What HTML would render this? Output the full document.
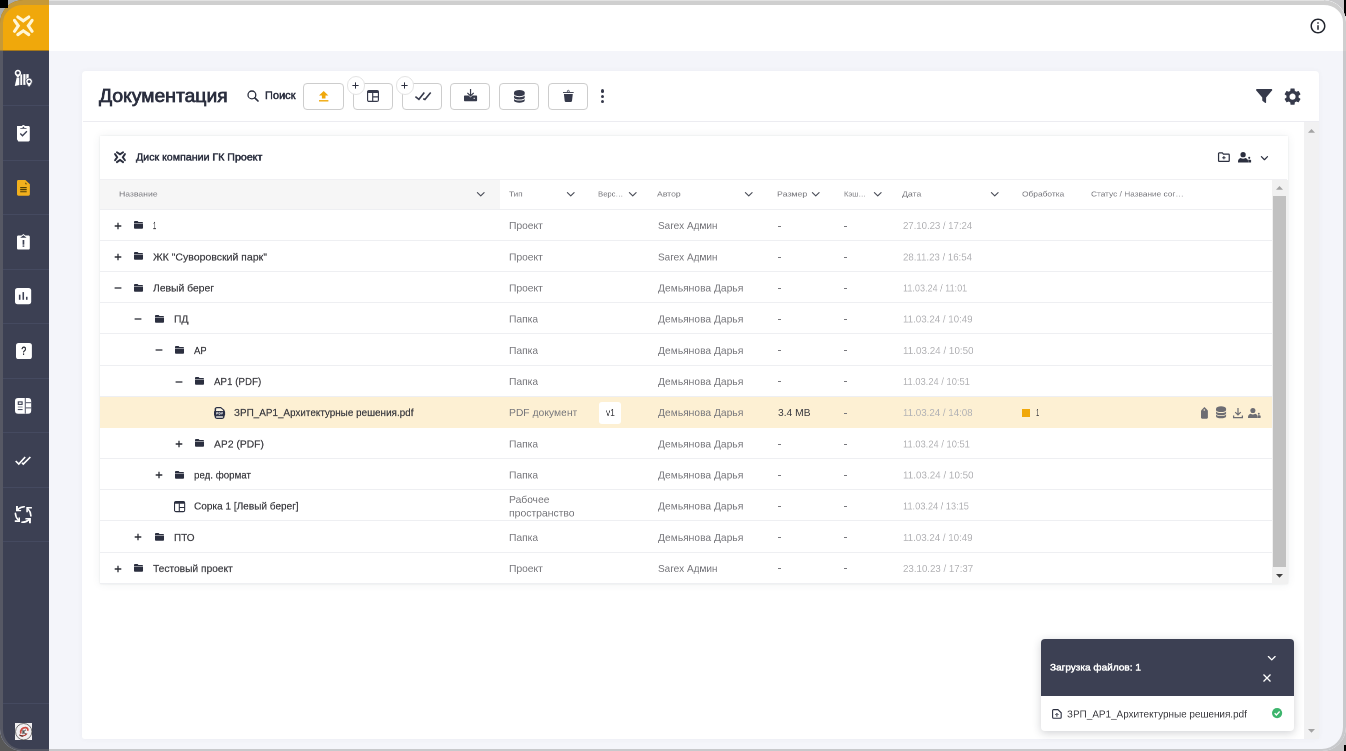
<!DOCTYPE html>
<html lang="ru">
<head>
<meta charset="utf-8">
<title>Документация</title>
<style>
*{box-sizing:border-box;margin:0;padding:0}
html,body{width:1346px;height:751px;overflow:hidden}
body{position:relative;background:#cdcdcd;font-family:"Liberation Sans",sans-serif;color:#2f3342;font-size:11px}
.abs{position:absolute}
svg{display:block;position:absolute;overflow:visible}
#win{position:absolute;left:0;top:0;width:1346px;height:751px;border-radius:23px 22px 24px 22px;overflow:hidden;background:#f4f5fa}
#page{position:absolute;left:0;top:0;width:1346px;height:751px}
#ring{position:absolute;left:0;top:0;width:1346px;height:751px;border-radius:23px 22px 24px 22px;border-style:solid;border-color:rgba(128,128,128,.38);border-width:5px 3px 2px 3px}
.t{position:absolute;white-space:nowrap;transform-origin:0 0;will-change:transform}
.btn{position:absolute;top:83px;width:40.200px;height:26.600px;border:1px solid #cdcdcd;border-radius:4px;background:#fff}
.pl{position:absolute;top:76.200px;width:18.500px;height:18.500px;border:1px solid #e4e4e4;border-radius:50%;background:#fff}
.sep{position:absolute;left:3px;width:46px;height:1px;background:#454a60}
.rb{position:absolute;left:100px;width:1173px;height:1px;background:#eeeff2}
</style>
</head>
<body>

<div class="abs" style="left:0;top:0;width:673px;height:375px;background:#a9adb1"></div>
<div class="abs" style="left:673px;top:0;width:673px;height:375px;background:#c9c9cb"></div>
<div class="abs" style="left:0;top:375px;width:673px;height:376px;background:#585858"></div>
<div class="abs" style="left:673px;top:375px;width:673px;height:376px;background:#c4c4c6"></div>
<div class="abs" style="left:1344px;top:0;width:2px;height:16px;background:#000"></div>
<div class="abs" style="left:1344px;top:745px;width:2px;height:6px;background:#000"></div>
<div id="win"><div id="page">
<div class="abs" style="left:0;top:0;width:49px;height:751px;background:#3c4053"></div>
<div class="abs" style="left:0;top:0;width:49px;height:50px;background:#f0a80b"></div>
<div class="abs" style="left:0;top:49.500px;width:49px;height:1.500px;background:#a3761a"></div>
<svg style="left:0;top:0" width="60" height="200" viewBox="0 0 60 200"><path d="M17.81 16.98 L23.30 20.80 L28.79 16.98 M17.81 34.62 L23.30 30.80 L28.79 34.62 M14.48 20.31 L18.30 25.80 L14.48 31.29 M32.12 20.31 L28.30 25.80 L32.12 31.29 " fill="none" stroke="#fff6d6" stroke-width="3.1" stroke-linecap="round" stroke-linejoin="miter"/></svg>
<div class="sep" style="top:105px"></div>
<div class="sep" style="top:159.5px"></div>
<div class="sep" style="top:214px"></div>
<div class="sep" style="top:268.5px"></div>
<div class="sep" style="top:323px"></div>
<div class="sep" style="top:377.5px"></div>
<div class="sep" style="top:432px"></div>
<div class="sep" style="top:486.5px"></div>
<div class="sep" style="top:541px"></div>
<div class="sep" style="top:703px"></div>
<div class="abs" style="left:49px;top:0;width:1297px;height:50.500px;background:#fff"></div>
<svg style="left:1308.5px;top:16.8px" width="18" height="18" viewBox="0 0 24 24" ><path fill="#23262f" d="M11 7h2v2h-2zm0 4h2v6h-2zm1-9C6.48 2 2 6.480 2 12s4.480 10 10 10 10-4.480 10-10S17.520 2 12 2zm0 18c-4.410 0-8-3.590-8-8s3.590-8 8-8 8 3.590 8 8-3.590 8-8 8z"/></svg>
<div class="abs" style="left:82.200px;top:70.700px;width:1236.800px;height:668.300px;background:#fff;border-radius:4px 4px 3px 3px;box-shadow:0 0 5px rgba(70,75,100,.05)"></div>
<div class="abs" style="left:83px;top:121px;width:1236px;height:1px;background:#ececf1"></div>
<div class="t" style="left:98.9px;top:86px;font-size:36px;line-height:39px;color:#2b2f3f;transform:scale(0.5373,.5);-webkit-text-stroke:1.4px #2b2f3f;">Документация</div>
<svg style="left:246.9px;top:89.9px" width="12" height="12" viewBox="0 0 12 12" ><circle cx="4.900" cy="4.900" r="3.900" fill="none" stroke="#2b2f3f" stroke-width="1.300"/><path d="M7.800 7.800 11 11" stroke="#2b2f3f" stroke-width="1.700" stroke-linecap="round"/></svg>
<div class="t" style="left:265.0px;top:89px;font-size:21.2px;line-height:25px;color:#2b2f3f;transform:scale(0.5192,.5);-webkit-text-stroke:1px #2b2f3f;">Поиск</div>
<div class="btn" style="left:303.4px"></div>
<div class="btn" style="left:353.1px"></div>
<div class="btn" style="left:401.9px"></div>
<div class="btn" style="left:450.3px"></div>
<div class="btn" style="left:499.1px"></div>
<div class="btn" style="left:548.2px"></div>
<div class="pl" style="left:346.6px"></div>
<svg style="left:352.4px;top:82.0px" width="7" height="7" viewBox="0 0 7 7" ><path d="M3.5 .4v6.2M.4 3.5h6.2" stroke="#2b2f3f" stroke-width="1" fill="none"/></svg>
<div class="pl" style="left:395.5px"></div>
<svg style="left:401.2px;top:82.0px" width="7" height="7" viewBox="0 0 7 7" ><path d="M3.5 .4v6.2M.4 3.5h6.2" stroke="#2b2f3f" stroke-width="1" fill="none"/></svg>
<svg style="left:319.4px;top:90.9px" width="9.4" height="10.5" viewBox="0 0 9.400 10.500" ><path d="M4.700 0 9.400 4.500H6.500V7.500H2.900V4.500H0z" fill="#f0a80b"/><rect x="0" y="9.100" width="9.400" height="1.400" fill="#f0a80b"/></svg>
<svg style="left:367.0px;top:89.9px" width="12" height="12" viewBox="0 0 12 12" ><rect x="0.575" y="0.575" width="10.85" height="10.85" rx="1.500" fill="none" stroke="#363a4b" stroke-width="1.15"/><rect x=".500" y=".500" width="11" height="2.6" rx="1" fill="#363a4b"/><path d="M5.700 2.500v9M5.700 6.900h5.800" stroke="#363a4b" stroke-width="1.15" fill="none"/></svg>
<svg style="left:414.7px;top:92.3px" width="16" height="8.4" viewBox="0 0 16 8.400" ><path d="M.400 4.600 3.900 7.300 9.300.600M8.200 6.800 9.900 7.500 15.700.600" fill="none" stroke="#363a4b" stroke-width="1.600" stroke-linejoin="miter"/></svg>
<svg style="left:463.9px;top:89.3px" width="13.1" height="12.2" viewBox="0 0 13.100 12.200" ><path d="M0 7.600c0-.600.400-1 1-1h3.700l1.850 1.900 1.850-1.900h3.700c.600 0 1 .400 1 1v3.600c0 .600-.400 1-1 1H1c-.600 0-1-.400-1-1z" fill="#363a4b"/><path d="M6.550 0v7M3.400 3.900 6.550 7 9.700 3.900" fill="none" stroke="#363a4b" stroke-width="1.200"/><rect x="9.600" y="8.800" width="1.300" height="1" fill="#fff"/></svg>
<svg style="left:514.4px;top:89.6px" width="10.7" height="12.8" viewBox="0 0 10.700 12.800" ><path d="M0 2.600C0 1.160 2.400 0 5.350 0S10.700 1.160 10.700 2.600V4C10.700 5.400 8.300 6.200 5.350 6.200S0 5.400 0 4z" fill="#363a4b"/><path d="M0 5.600C.900 6.700 3 7.200 5.350 7.200S9.800 6.700 10.700 5.600V7.400C10.700 8.800 8.300 9.600 5.350 9.600S0 8.800 0 7.400z" fill="#363a4b"/><path d="M0 8.900C.900 10 3 10.500 5.350 10.500S9.800 10 10.700 8.900V10.600C10.700 12 8.300 12.800 5.350 12.800S0 12 0 10.600z" fill="#363a4b"/></svg>
<svg style="left:563.1px;top:89.9px" width="10.7" height="11.9" viewBox="0 0 10.700 11.900" ><path d="M0 2.100h10.700v.900H0z" fill="#363a4b"/><circle cx="5.350" cy="1.300" r="1" fill="none" stroke="#363a4b" stroke-width=".800"/><path d="M.900 3.900h8.900l-.800 7.200c-.050.500-.400.800-.900.800H2.600c-.500 0-.850-.300-.900-.800z" fill="#363a4b"/></svg>
<div class="abs" style="left:601px;top:89.4px;width:3.400px;height:3.400px;border-radius:50%;background:#363a4b"></div>
<div class="abs" style="left:601px;top:94.6px;width:3.400px;height:3.400px;border-radius:50%;background:#363a4b"></div>
<div class="abs" style="left:601px;top:99.7px;width:3.400px;height:3.400px;border-radius:50%;background:#363a4b"></div>
<svg style="left:1255.7px;top:89.0px" width="16.3" height="14" viewBox="0 0 16.300 14" ><path d="M.900 0h14.500c.750 0 1.150.900.650 1.450L10.100 8.400v5.100c0 .400-.450.650-.800.400L6.700 12.100c-.300-.200-.450-.500-.450-.850V8.400L.250 1.450C-.250.900.150 0 .900 0z" fill="#363a4b"/></svg>
<svg style="left:1283.7px;top:87.9px" width="17.1" height="17.3" viewBox="1.900 1.900 20.200 20.200" ><path fill="#363a4b" d="M19.140 12.940c.040-.300.060-.610.060-.940 0-.320-.020-.640-.070-.940l2.030-1.580c.180-.140.230-.410.120-.610l-1.920-3.320c-.120-.220-.370-.290-.590-.220l-2.390.960c-.500-.380-1.030-.700-1.620-.940l-.360-2.540c-.040-.240-.240-.410-.480-.410h-3.840c-.240 0-.430.170-.470.410l-.360 2.540c-.590.240-1.130.570-1.620.940l-2.390-.960c-.220-.080-.470 0-.590.220L2.740 8.870c-.120.210-.080.470.120.610l2.030 1.580c-.050.300-.090.630-.090.940s.020.640.070.940l-2.030 1.580c-.180.140-.230.410-.120.610l1.920 3.320c.120.220.370.290.590.220l2.390-.960c.500.380 1.030.700 1.620.940l.360 2.540c.050.240.240.410.480.410h3.840c.240 0 .440-.170.470-.410l.360-2.540c.590-.240 1.130-.560 1.620-.940l2.390.960c.220.080.470 0 .590-.220l1.920-3.320c.120-.220.070-.470-.120-.610l-2.010-1.580zM12 15.600c-1.980 0-3.600-1.620-3.600-3.600s1.620-3.600 3.600-3.600 3.600 1.620 3.600 3.600-1.620 3.600-3.600 3.600z"/></svg>
<div class="abs" style="left:1303.800px;top:121.500px;width:15.200px;height:617.500px;background:#f1f1f2"></div>
<svg style="left:1308.0px;top:128.5px" width="7" height="3.8" viewBox="0 0 7 3.800" ><path d="M0 3.800 3.500 0 7 3.800z" fill="#a3a3a3"/></svg>
<svg style="left:1308.0px;top:729.2px" width="7" height="3.8" viewBox="0 0 7 3.800" ><path d="M0 0 3.500 3.800 7 0z" fill="#a3a3a3"/></svg>
<div class="abs" style="left:99.500px;top:135.800px;width:1188.200px;height:447.800px;background:#fff;box-shadow:0 0 9px rgba(60,64,82,.07),0 0 2px rgba(60,64,82,.10)"></div>
<svg style="left:0;top:0" width="60" height="200" viewBox="0 0 60 200"><path d="M116.92 152.25 L120.00 154.39 L123.08 152.25 M116.92 162.15 L120.00 160.00 L123.08 162.15 M115.05 154.12 L117.19 157.20 L115.05 160.28 M124.95 154.12 L122.81 157.20 L124.95 160.28 " fill="none" stroke="#2b2f3f" stroke-width="1.9" stroke-linecap="round" stroke-linejoin="miter"/></svg>
<div class="t" style="left:135.8px;top:151px;font-size:19.6px;line-height:24px;color:#2b2f3f;transform:scale(0.5426,.5);-webkit-text-stroke:0.9px #2b2f3f;">Диск компании ГК Проект</div>
<svg style="left:1218.2px;top:152.4px" width="11.8" height="10.2" viewBox="0 0 12.600 10.400" ><path d="M1.300.700h3.300l1.200 1.300h5.500c.400 0 .700.300.700.700v6.300c0 .400-.300.700-.700.700H1.300c-.400 0-.700-.300-.700-.700V1.400c0-.400.300-.700.700-.700z" fill="none" stroke="#2b2f3f" stroke-width="1.300"/><path d="M6.300 4v3.600M4.500 5.800h3.600" stroke="#2b2f3f" stroke-width="1.100"/></svg>
<svg style="left:1237.8px;top:152.3px" width="13.2" height="10.4" viewBox="0 0 14 11" ><circle cx="5.400" cy="2.800" r="2.800" fill="#2b2f3f"/><path d="M0 10.300c0-2.100 1.200-3.400 2.800-3.900 1.600 1 3.600 1 5.200 0 1.600.500 2.800 1.800 2.800 3.900v.700H0z" fill="#2b2f3f"/><circle cx="11.900" cy="6.200" r="1.100" fill="#2b2f3f"/><path d="M10.900 8.100h2.100c.5 0 .9.400.9.900v2h-3z" fill="#2b2f3f"/></svg>
<svg style="left:1259.8px;top:154.6px" width="8.9" height="6.2" viewBox="-4.45 -3.1 8.9 6.2" ><path d="M-3.05 -1.5 L0 1.6 L3.05 -1.5" fill="none" stroke="#2b2f3f" stroke-width="1.25" stroke-linecap="round" stroke-linejoin="round"/></svg>
<div class="abs" style="left:100px;top:179px;width:1173px;height:30.500px;background:#fff"></div>
<div class="abs" style="left:100px;top:179px;width:399.500px;height:30.500px;background:#f6f6f6"></div>
<div class="abs" style="left:100px;top:179px;width:1187px;height:1px;background:#f0f0f3"></div>
<div class="t" style="left:118.8px;top:189px;font-size:15.2px;line-height:19px;color:#7b7b80;transform:scale(0.5683,.5);">Название</div>
<div class="t" style="left:509.0px;top:189px;font-size:15.2px;line-height:19px;color:#7b7b80;transform:scale(0.5367,.5);">Тип</div>
<div class="t" style="left:598.4px;top:189px;font-size:15.2px;line-height:19px;color:#7b7b80;transform:scale(0.5076,.5);">Верс…</div>
<div class="t" style="left:657.3px;top:189px;font-size:15.2px;line-height:19px;color:#7b7b80;transform:scale(0.5700,.5);">Автор</div>
<div class="t" style="left:776.7px;top:189px;font-size:15.2px;line-height:19px;color:#7b7b80;transform:scale(0.5800,.5);">Размер</div>
<div class="t" style="left:843.6px;top:189px;font-size:15.2px;line-height:19px;color:#7b7b80;transform:scale(0.5000,.5);">Кэш…</div>
<div class="t" style="left:902.4px;top:189px;font-size:15.2px;line-height:19px;color:#7b7b80;transform:scale(0.5734,.5);">Дата</div>
<div class="t" style="left:1022.2px;top:189px;font-size:15.2px;line-height:19px;color:#7b7b80;transform:scale(0.5505,.5);">Обработка</div>
<div class="t" style="left:1091.1px;top:189px;font-size:15.2px;line-height:19px;color:#7b7b80;transform:scale(0.5464,.5);">Статус / Название сог…</div>
<svg style="left:476.4px;top:191.1px" width="9.5" height="6.4" viewBox="-4.75 -3.2 9.5 6.4" ><path d="M-3.35 -1.6 L0 1.7 L3.35 -1.6" fill="none" stroke="#4a4d58" stroke-width="1.15" stroke-linecap="round" stroke-linejoin="round"/></svg>
<svg style="left:566.0px;top:191.1px" width="9.5" height="6.4" viewBox="-4.75 -3.2 9.5 6.4" ><path d="M-3.35 -1.6 L0 1.7 L3.35 -1.6" fill="none" stroke="#4a4d58" stroke-width="1.15" stroke-linecap="round" stroke-linejoin="round"/></svg>
<svg style="left:627.5px;top:191.1px" width="9.5" height="6.4" viewBox="-4.75 -3.2 9.5 6.4" ><path d="M-3.35 -1.6 L0 1.7 L3.35 -1.6" fill="none" stroke="#4a4d58" stroke-width="1.15" stroke-linecap="round" stroke-linejoin="round"/></svg>
<svg style="left:744.4px;top:191.1px" width="9.5" height="6.4" viewBox="-4.75 -3.2 9.5 6.4" ><path d="M-3.35 -1.6 L0 1.7 L3.35 -1.6" fill="none" stroke="#4a4d58" stroke-width="1.15" stroke-linecap="round" stroke-linejoin="round"/></svg>
<svg style="left:811.2px;top:191.1px" width="9.5" height="6.4" viewBox="-4.75 -3.2 9.5 6.4" ><path d="M-3.35 -1.6 L0 1.7 L3.35 -1.6" fill="none" stroke="#4a4d58" stroke-width="1.15" stroke-linecap="round" stroke-linejoin="round"/></svg>
<svg style="left:873.1px;top:191.1px" width="9.5" height="6.4" viewBox="-4.75 -3.2 9.5 6.4" ><path d="M-3.35 -1.6 L0 1.7 L3.35 -1.6" fill="none" stroke="#4a4d58" stroke-width="1.15" stroke-linecap="round" stroke-linejoin="round"/></svg>
<svg style="left:989.9px;top:191.1px" width="9.5" height="6.4" viewBox="-4.75 -3.2 9.5 6.4" ><path d="M-3.35 -1.6 L0 1.7 L3.35 -1.6" fill="none" stroke="#4a4d58" stroke-width="1.15" stroke-linecap="round" stroke-linejoin="round"/></svg>
<div class="rb" style="top:209px"></div>
<div class="rb" style="top:240px"></div>
<div class="rb" style="top:271px"></div>
<div class="rb" style="top:302px"></div>
<div class="rb" style="top:333px"></div>
<div class="rb" style="top:365px"></div>
<div class="rb" style="top:396px"></div>
<div class="rb" style="top:427px"></div>
<div class="rb" style="top:458px"></div>
<div class="rb" style="top:489px"></div>
<div class="rb" style="top:520px"></div>
<div class="rb" style="top:552px"></div>
<div class="rb" style="top:583px"></div>
<div class="abs" style="left:100px;top:396.500px;width:1173px;height:31.400px;background:#fdf0d3"></div>
<svg style="left:114.0px;top:221.7px" width="8" height="8" viewBox="0 0 8 8" ><path d="M4 .700v6.600M.700 4h6.600" stroke="#2c2e36" stroke-width="1.300" fill="none"/></svg>
<svg style="left:134.3px;top:221.2px" width="9.4" height="8" viewBox="0 0 10 8.4" ><path d="M0.9 0h2.9l1 1.1h3.9c.5 0 .9.4.9.9v.5H0V.9C0 .4.4 0 .9 0z" fill="#2b2f3f"/><path d="M0 3.2h9.6v4.2c0 .5-.4.9-.9.9H.9c-.5 0-.9-.4-.9-.9z" fill="#2b2f3f"/></svg>
<div class="t" style="left:153.2px;top:220px;font-size:20.4px;line-height:22px;color:#3d3d42;transform:scale(0.2997,.5);-webkit-text-stroke:0.4px #3d3d42;">1</div>
<div class="t" style="left:509.0px;top:220px;font-size:20.4px;line-height:22px;color:#77777c;transform:scale(0.5030,.5);">Проект</div>
<div class="t" style="left:657.9px;top:220px;font-size:20.4px;line-height:22px;color:#77777c;transform:scale(0.4911,.5);">Sarex Админ</div>
<div class="abs" style="left:777.500px;top:225.5px;width:3.500px;height:1px;background:#77777c"></div>
<div class="abs" style="left:843.800px;top:225.5px;width:3.500px;height:1px;background:#77777c"></div>
<div class="t" style="left:903.4px;top:220px;font-size:20.4px;line-height:22px;color:#b3b3b6;transform:scale(0.4693,.5);">27.10.23 / 17:24</div>
<svg style="left:114.0px;top:252.8px" width="8" height="8" viewBox="0 0 8 8" ><path d="M4 .700v6.600M.700 4h6.600" stroke="#2c2e36" stroke-width="1.300" fill="none"/></svg>
<svg style="left:134.3px;top:252.3px" width="9.4" height="8" viewBox="0 0 10 8.4" ><path d="M0.9 0h2.9l1 1.1h3.9c.5 0 .9.4.9.9v.5H0V.9C0 .4.4 0 .9 0z" fill="#2b2f3f"/><path d="M0 3.2h9.6v4.2c0 .5-.4.9-.9.9H.9c-.5 0-.9-.4-.9-.9z" fill="#2b2f3f"/></svg>
<div class="t" style="left:153.2px;top:251px;font-size:20.4px;line-height:24px;color:#3d3d42;transform:scale(0.5151,.5);-webkit-text-stroke:0.4px #3d3d42;">ЖК "Суворовский парк"</div>
<div class="t" style="left:509.0px;top:251px;font-size:20.4px;line-height:24px;color:#77777c;transform:scale(0.5030,.5);">Проект</div>
<div class="t" style="left:657.9px;top:251px;font-size:20.4px;line-height:24px;color:#77777c;transform:scale(0.4911,.5);">Sarex Админ</div>
<div class="abs" style="left:777.500px;top:256.6px;width:3.500px;height:1px;background:#77777c"></div>
<div class="abs" style="left:843.800px;top:256.6px;width:3.500px;height:1px;background:#77777c"></div>
<div class="t" style="left:903.4px;top:251px;font-size:20.4px;line-height:24px;color:#b3b3b6;transform:scale(0.4728,.5);">28.11.23 / 16:54</div>
<svg style="left:114.0px;top:284.0px" width="8" height="8" viewBox="0 0 8 8" ><path d="M.600 4h6.800" stroke="#2c2e36" stroke-width="1.300" fill="none"/></svg>
<svg style="left:134.3px;top:283.5px" width="9.4" height="8" viewBox="0 0 10 8.4" ><path d="M0.9 0h2.9l1 1.1h3.9c.5 0 .9.4.9.9v.5H0V.9C0 .4.4 0 .9 0z" fill="#2b2f3f"/><path d="M0 3.2h9.6v4.2c0 .5-.4.9-.9.9H.9c-.5 0-.9-.4-.9-.9z" fill="#2b2f3f"/></svg>
<div class="t" style="left:153.2px;top:282px;font-size:20.4px;line-height:24px;color:#3d3d42;transform:scale(0.5074,.5);-webkit-text-stroke:0.4px #3d3d42;">Левый берег</div>
<div class="t" style="left:509.0px;top:282px;font-size:20.4px;line-height:24px;color:#77777c;transform:scale(0.5030,.5);">Проект</div>
<div class="t" style="left:657.9px;top:282px;font-size:20.4px;line-height:24px;color:#77777c;transform:scale(0.5039,.5);">Демьянова Дарья</div>
<div class="abs" style="left:777.500px;top:287.8px;width:3.500px;height:1px;background:#77777c"></div>
<div class="abs" style="left:843.800px;top:287.8px;width:3.500px;height:1px;background:#77777c"></div>
<div class="t" style="left:903.4px;top:282px;font-size:20.4px;line-height:24px;color:#b3b3b6;transform:scale(0.4445,.5);">11.03.24 / 11:01</div>
<svg style="left:134.3px;top:315.2px" width="8" height="8" viewBox="0 0 8 8" ><path d="M.600 4h6.800" stroke="#2c2e36" stroke-width="1.300" fill="none"/></svg>
<svg style="left:154.7px;top:314.7px" width="9.4" height="8" viewBox="0 0 10 8.4" ><path d="M0.9 0h2.9l1 1.1h3.9c.5 0 .9.4.9.9v.5H0V.9C0 .4.4 0 .9 0z" fill="#2b2f3f"/><path d="M0 3.2h9.6v4.2c0 .5-.4.9-.9.9H.9c-.5 0-.9-.4-.9-.9z" fill="#2b2f3f"/></svg>
<div class="t" style="left:173.5px;top:313px;font-size:20.4px;line-height:24px;color:#3d3d42;transform:scale(0.5004,.5);-webkit-text-stroke:0.4px #3d3d42;">ПД</div>
<div class="t" style="left:509.0px;top:313px;font-size:20.4px;line-height:24px;color:#77777c;transform:scale(0.5037,.5);">Папка</div>
<div class="t" style="left:657.9px;top:313px;font-size:20.4px;line-height:24px;color:#77777c;transform:scale(0.5039,.5);">Демьянова Дарья</div>
<div class="abs" style="left:777.500px;top:319.0px;width:3.500px;height:1px;background:#77777c"></div>
<div class="abs" style="left:843.800px;top:319.0px;width:3.500px;height:1px;background:#77777c"></div>
<div class="t" style="left:903.4px;top:313px;font-size:20.4px;line-height:24px;color:#b3b3b6;transform:scale(0.4769,.5);">11.03.24 / 10:49</div>
<svg style="left:154.7px;top:346.3px" width="8" height="8" viewBox="0 0 8 8" ><path d="M.600 4h6.800" stroke="#2c2e36" stroke-width="1.300" fill="none"/></svg>
<svg style="left:175.0px;top:345.8px" width="9.4" height="8" viewBox="0 0 10 8.4" ><path d="M0.9 0h2.9l1 1.1h3.9c.5 0 .9.4.9.9v.5H0V.9C0 .4.4 0 .9 0z" fill="#2b2f3f"/><path d="M0 3.2h9.6v4.2c0 .5-.4.9-.9.9H.9c-.5 0-.9-.4-.9-.9z" fill="#2b2f3f"/></svg>
<div class="t" style="left:193.9px;top:345px;font-size:20.4px;line-height:22px;color:#3d3d42;transform:scale(0.4704,.5);-webkit-text-stroke:0.4px #3d3d42;">АР</div>
<div class="t" style="left:509.0px;top:345px;font-size:20.4px;line-height:22px;color:#77777c;transform:scale(0.5037,.5);">Папка</div>
<div class="t" style="left:657.9px;top:345px;font-size:20.4px;line-height:22px;color:#77777c;transform:scale(0.5039,.5);">Демьянова Дарья</div>
<div class="abs" style="left:777.500px;top:350.1px;width:3.500px;height:1px;background:#77777c"></div>
<div class="abs" style="left:843.800px;top:350.1px;width:3.500px;height:1px;background:#77777c"></div>
<div class="t" style="left:903.4px;top:345px;font-size:20.4px;line-height:22px;color:#b3b3b6;transform:scale(0.4837,.5);">11.03.24 / 10:50</div>
<svg style="left:175.1px;top:377.5px" width="8" height="8" viewBox="0 0 8 8" ><path d="M.600 4h6.800" stroke="#2c2e36" stroke-width="1.300" fill="none"/></svg>
<svg style="left:195.4px;top:377.0px" width="9.4" height="8" viewBox="0 0 10 8.4" ><path d="M0.9 0h2.9l1 1.1h3.9c.5 0 .9.4.9.9v.5H0V.9C0 .4.4 0 .9 0z" fill="#2b2f3f"/><path d="M0 3.2h9.6v4.2c0 .5-.4.9-.9.9H.9c-.5 0-.9-.4-.9-.9z" fill="#2b2f3f"/></svg>
<div class="t" style="left:214.2px;top:376px;font-size:20.4px;line-height:22px;color:#3d3d42;transform:scale(0.4791,.5);-webkit-text-stroke:0.4px #3d3d42;">АР1 (PDF)</div>
<div class="t" style="left:509.0px;top:376px;font-size:20.4px;line-height:22px;color:#77777c;transform:scale(0.5037,.5);">Папка</div>
<div class="t" style="left:657.9px;top:376px;font-size:20.4px;line-height:22px;color:#77777c;transform:scale(0.5039,.5);">Демьянова Дарья</div>
<div class="abs" style="left:777.500px;top:381.3px;width:3.500px;height:1px;background:#77777c"></div>
<div class="abs" style="left:843.800px;top:381.3px;width:3.500px;height:1px;background:#77777c"></div>
<div class="t" style="left:903.4px;top:376px;font-size:20.4px;line-height:22px;color:#b3b3b6;transform:scale(0.4584,.5);">11.03.24 / 10:51</div>
<svg style="left:213.7px;top:406.6px" width="11.1" height="12.1" viewBox="0 0 11.100 12.100" ><path d="M2.800 0h4.100l3.600 3v6.600c0 1.400-1.100 2.500-2.500 2.500H3.100c-1.400 0-2.500-1.100-2.500-2.500V2.200C.600 1 1.600 0 2.800 0z" fill="#2b3045"/><path d="M2.300 1.300h4.400l2.400 2v.900H2z" fill="#fff8e6"/><rect x="2" y="8.900" width="7.100" height="2" rx=".700" fill="#bcbcbc"/><rect x="0" y="4.100" width="11.100" height="4.600" rx=".900" fill="#2b3045"/><path d="M2.600 7.500V5.400h.900c.900 0 .900 1.200 0 1.200h-.900M5 5.400v2.100h.700c1.200 0 1.200-2.100 0-2.100zM7.700 7.500V5.400h1.200M7.700 6.500h1" stroke="#fff" stroke-width=".650" fill="none"/></svg>
<div class="t" style="left:234.4px;top:407px;font-size:20.4px;line-height:22px;color:#3d3d42;transform:scale(0.4855,.5);-webkit-text-stroke:0.4px #3d3d42;">ЗРП_АР1_Архитектурные решения.pdf</div>
<div class="t" style="left:509.0px;top:407px;font-size:20.4px;line-height:22px;color:#77777c;transform:scale(0.5066,.5);">PDF документ</div>
<div class="t" style="left:657.9px;top:407px;font-size:20.4px;line-height:22px;color:#77777c;transform:scale(0.5039,.5);">Демьянова Дарья</div>
<div class="t" style="left:777.5px;top:407px;font-size:20.4px;line-height:22px;color:#3d3d42;transform:scale(0.5029,.5);">3.4 MB</div>
<div class="abs" style="left:843.800px;top:412.5px;width:3.500px;height:1px;background:#77777c"></div>
<div class="t" style="left:903.4px;top:407px;font-size:20.4px;line-height:22px;color:#b3b3b6;transform:scale(0.4769,.5);">11.03.24 / 14:08</div>
<svg style="left:175.1px;top:439.8px" width="8" height="8" viewBox="0 0 8 8" ><path d="M4 .700v6.600M.700 4h6.600" stroke="#2c2e36" stroke-width="1.300" fill="none"/></svg>
<svg style="left:195.4px;top:439.3px" width="9.4" height="8" viewBox="0 0 10 8.4" ><path d="M0.9 0h2.9l1 1.1h3.9c.5 0 .9.4.9.9v.5H0V.9C0 .4.4 0 .9 0z" fill="#2b2f3f"/><path d="M0 3.2h9.6v4.2c0 .5-.4.9-.9.9H.9c-.5 0-.9-.4-.9-.9z" fill="#2b2f3f"/></svg>
<div class="t" style="left:214.2px;top:438px;font-size:20.4px;line-height:24px;color:#3d3d42;transform:scale(0.5065,.5);-webkit-text-stroke:0.4px #3d3d42;">АР2 (PDF)</div>
<div class="t" style="left:509.0px;top:438px;font-size:20.4px;line-height:24px;color:#77777c;transform:scale(0.5037,.5);">Папка</div>
<div class="t" style="left:657.9px;top:438px;font-size:20.4px;line-height:24px;color:#77777c;transform:scale(0.5039,.5);">Демьянова Дарья</div>
<div class="abs" style="left:777.500px;top:443.6px;width:3.500px;height:1px;background:#77777c"></div>
<div class="abs" style="left:843.800px;top:443.6px;width:3.500px;height:1px;background:#77777c"></div>
<div class="t" style="left:903.4px;top:438px;font-size:20.4px;line-height:24px;color:#b3b3b6;transform:scale(0.4584,.5);">11.03.24 / 10:51</div>
<svg style="left:154.7px;top:471.0px" width="8" height="8" viewBox="0 0 8 8" ><path d="M4 .700v6.600M.700 4h6.600" stroke="#2c2e36" stroke-width="1.300" fill="none"/></svg>
<svg style="left:175.0px;top:470.5px" width="9.4" height="8" viewBox="0 0 10 8.4" ><path d="M0.9 0h2.9l1 1.1h3.9c.5 0 .9.4.9.9v.5H0V.9C0 .4.4 0 .9 0z" fill="#2b2f3f"/><path d="M0 3.2h9.6v4.2c0 .5-.4.9-.9.9H.9c-.5 0-.9-.4-.9-.9z" fill="#2b2f3f"/></svg>
<div class="t" style="left:193.9px;top:469px;font-size:20.4px;line-height:24px;color:#3d3d42;transform:scale(0.4773,.5);-webkit-text-stroke:0.4px #3d3d42;">ред. формат</div>
<div class="t" style="left:509.0px;top:469px;font-size:20.4px;line-height:24px;color:#77777c;transform:scale(0.5037,.5);">Папка</div>
<div class="t" style="left:657.9px;top:469px;font-size:20.4px;line-height:24px;color:#77777c;transform:scale(0.5039,.5);">Демьянова Дарья</div>
<div class="abs" style="left:777.500px;top:474.8px;width:3.500px;height:1px;background:#77777c"></div>
<div class="abs" style="left:843.800px;top:474.8px;width:3.500px;height:1px;background:#77777c"></div>
<div class="t" style="left:903.4px;top:469px;font-size:20.4px;line-height:24px;color:#b3b3b6;transform:scale(0.4837,.5);">11.03.24 / 10:50</div>
<svg style="left:173.6px;top:500.6px" width="11.2" height="11.2" viewBox="0 0 12 12" ><rect x="0.575" y="0.575" width="10.85" height="10.85" rx="1.500" fill="none" stroke="#2b2f3f" stroke-width="1.15"/><rect x=".500" y=".500" width="11" height="2.5" rx="1" fill="#2b2f3f"/><path d="M5.700 2.500v9M5.700 6.900h5.800" stroke="#2b2f3f" stroke-width="1.15" fill="none"/></svg>
<div class="t" style="left:193.7px;top:500px;font-size:20.4px;line-height:24px;color:#3d3d42;transform:scale(0.4930,.5);-webkit-text-stroke:0.4px #3d3d42;">Сорка 1 [Левый берег]</div>
<div class="t" style="left:509.0px;top:494px;font-size:20.4px;line-height:22px;color:#77777c;transform:scale(0.5051,.5);">Рабочее</div>
<div class="t" style="left:509.0px;top:507px;font-size:20.4px;line-height:24px;color:#77777c;transform:scale(0.5096,.5);">пространство</div>
<div class="t" style="left:657.9px;top:500px;font-size:20.4px;line-height:24px;color:#77777c;transform:scale(0.5039,.5);">Демьянова Дарья</div>
<div class="abs" style="left:777.500px;top:506.0px;width:3.500px;height:1px;background:#77777c"></div>
<div class="abs" style="left:843.800px;top:506.0px;width:3.500px;height:1px;background:#77777c"></div>
<div class="t" style="left:903.4px;top:500px;font-size:20.4px;line-height:24px;color:#b3b3b6;transform:scale(0.4515,.5);">11.03.24 / 13:15</div>
<svg style="left:134.3px;top:533.4px" width="8" height="8" viewBox="0 0 8 8" ><path d="M4 .700v6.600M.700 4h6.600" stroke="#2c2e36" stroke-width="1.300" fill="none"/></svg>
<svg style="left:154.7px;top:532.9px" width="9.4" height="8" viewBox="0 0 10 8.4" ><path d="M0.9 0h2.9l1 1.1h3.9c.5 0 .9.4.9.9v.5H0V.9C0 .4.4 0 .9 0z" fill="#2b2f3f"/><path d="M0 3.2h9.6v4.2c0 .5-.4.9-.9.9H.9c-.5 0-.9-.4-.9-.9z" fill="#2b2f3f"/></svg>
<div class="t" style="left:173.5px;top:532px;font-size:20.4px;line-height:22px;color:#3d3d42;transform:scale(0.4860,.5);-webkit-text-stroke:0.4px #3d3d42;">ПТО</div>
<div class="t" style="left:509.0px;top:532px;font-size:20.4px;line-height:22px;color:#77777c;transform:scale(0.5037,.5);">Папка</div>
<div class="t" style="left:657.9px;top:532px;font-size:20.4px;line-height:22px;color:#77777c;transform:scale(0.5039,.5);">Демьянова Дарья</div>
<div class="abs" style="left:777.500px;top:537.1px;width:3.500px;height:1px;background:#77777c"></div>
<div class="abs" style="left:843.800px;top:537.1px;width:3.500px;height:1px;background:#77777c"></div>
<div class="t" style="left:903.4px;top:532px;font-size:20.4px;line-height:22px;color:#b3b3b6;transform:scale(0.4769,.5);">11.03.24 / 10:49</div>
<svg style="left:114.0px;top:564.5px" width="8" height="8" viewBox="0 0 8 8" ><path d="M4 .700v6.600M.700 4h6.600" stroke="#2c2e36" stroke-width="1.300" fill="none"/></svg>
<svg style="left:134.3px;top:564.0px" width="9.4" height="8" viewBox="0 0 10 8.4" ><path d="M0.9 0h2.9l1 1.1h3.9c.5 0 .9.4.9.9v.5H0V.9C0 .4.4 0 .9 0z" fill="#2b2f3f"/><path d="M0 3.2h9.6v4.2c0 .5-.4.9-.9.9H.9c-.5 0-.9-.4-.9-.9z" fill="#2b2f3f"/></svg>
<div class="t" style="left:153.2px;top:563px;font-size:20.4px;line-height:22px;color:#3d3d42;transform:scale(0.5004,.5);-webkit-text-stroke:0.4px #3d3d42;">Тестовый проект</div>
<div class="t" style="left:509.0px;top:563px;font-size:20.4px;line-height:22px;color:#77777c;transform:scale(0.5030,.5);">Проект</div>
<div class="t" style="left:657.9px;top:563px;font-size:20.4px;line-height:22px;color:#77777c;transform:scale(0.4911,.5);">Sarex Админ</div>
<div class="abs" style="left:777.500px;top:568.3px;width:3.500px;height:1px;background:#77777c"></div>
<div class="abs" style="left:843.800px;top:568.3px;width:3.500px;height:1px;background:#77777c"></div>
<div class="t" style="left:903.4px;top:563px;font-size:20.4px;line-height:22px;color:#b3b3b6;transform:scale(0.4761,.5);">23.10.23 / 17:37</div>
<div class="abs" style="left:599px;top:401.6px;width:22.400px;height:22.200px;background:#fff;border-radius:3px"></div>
<div class="t" style="left:605.8px;top:407px;font-size:20.4px;line-height:22px;color:#3d3d42;transform:scale(0.4084,.5);">v1</div>
<div class="abs" style="left:1022px;top:408.7px;width:8.400px;height:8px;background:#f0a80b"></div>
<div class="t" style="left:1035.5px;top:407px;font-size:20.4px;line-height:22px;color:#3d3d42;transform:scale(0.2909,.5);">1</div>
<svg style="left:1201.0px;top:407.0px" width="6.9" height="11.7" viewBox="0 0 6.900 11.700" ><path d="M3.450 0 6.900 3.400V10.600c0 .600-.500 1.100-1.100 1.100H1.100C.500 11.700 0 11.200 0 10.600V3.400z" fill="#6d6d73"/><circle cx="3.300" cy="3" r=".800" fill="#fdf0d3"/></svg>
<svg style="left:1216.2px;top:406.4px" width="10.1" height="12.5" viewBox="0 0 10.700 12.800" ><path d="M0 2.600C0 1.160 2.400 0 5.350 0S10.700 1.160 10.700 2.600V4C10.700 5.400 8.300 6.200 5.350 6.200S0 5.400 0 4z" fill="#6d6d73"/><path d="M0 5.600C.900 6.700 3 7.200 5.350 7.200S9.800 6.700 10.700 5.600V7.400C10.700 8.800 8.300 9.600 5.350 9.600S0 8.800 0 7.400z" fill="#6d6d73"/><path d="M0 8.900C.900 10 3 10.500 5.350 10.500S9.800 10 10.700 8.900V10.600C10.700 12 8.300 12.800 5.350 12.800S0 12 0 10.600z" fill="#6d6d73"/></svg>
<svg style="left:1233.0px;top:407.9px" width="10" height="10.2" viewBox="0 0 10 10.200" ><path d="M5 0v6.600M2.200 4.100 5 6.900 7.800 4.100" fill="none" stroke="#6d6d73" stroke-width="1.250"/><path d="M.600 7.400v2.200h8.800V7.400" fill="none" stroke="#6d6d73" stroke-width="1.250"/></svg>
<svg style="left:1248.4px;top:408.1px" width="12.7" height="10" viewBox="0 0 14 11" ><circle cx="5.400" cy="2.800" r="2.800" fill="#6d6d73"/><path d="M0 10.300c0-2.100 1.200-3.400 2.800-3.900 1.600 1 3.600 1 5.200 0 1.600.500 2.800 1.800 2.800 3.900v.700H0z" fill="#6d6d73"/><circle cx="11.900" cy="6.200" r="1.100" fill="#6d6d73"/><path d="M10.900 8.100h2.100c.5 0 .9.400.9.900v2h-3z" fill="#6d6d73"/></svg>
<div class="abs" style="left:1272.300px;top:179.500px;width:15.300px;height:404px;background:#f1f1f1"></div>
<div class="abs" style="left:1273px;top:195.500px;width:13px;height:371.200px;background:#c1c1c1"></div>
<svg style="left:1276.0px;top:186.0px" width="7" height="3.8" viewBox="0 0 7 3.800" ><path d="M0 3.800 3.500 0 7 3.800z" fill="#a3a3a3"/></svg>
<svg style="left:1276.0px;top:573.8px" width="7" height="3.8" viewBox="0 0 7 3.800" ><path d="M0 0 3.500 3.800 7 0z" fill="#404040"/></svg>
<div class="abs" style="left:1041.300px;top:638.600px;width:253px;height:92.200px;background:#fff;border-radius:4px;box-shadow:0 2px 8px rgba(40,44,60,.22)"></div>
<div class="abs" style="left:1041.300px;top:638.600px;width:253px;height:57.800px;background:#3c4053;border-radius:4px 4px 0 0"></div>
<div class="t" style="left:1049.5px;top:662px;font-size:19px;line-height:21px;color:#fff;transform:scale(0.5285,.5);-webkit-text-stroke:0.9px #fff;">Загрузка файлов: 1</div>
<svg style="left:1266.5px;top:654.6px" width="9.5" height="6.4" viewBox="-4.75 -3.2 9.5 6.4" ><path d="M-3.35 -1.6 L0 1.7 L3.35 -1.6" fill="none" stroke="#fff" stroke-width="1.35" stroke-linecap="round" stroke-linejoin="round"/></svg>
<svg style="left:1262.8px;top:673.8px" width="8" height="8" viewBox="0 0 8 8" ><path d="M.500 .500 7.500 7.500M7.500 .500 .500 7.500" stroke="#fff" stroke-width="1.300" fill="none"/></svg>
<svg style="left:1052.0px;top:709.0px" width="9.8" height="9.8" viewBox="0 0 9.800 9.800" ><path d="M1.600.600h4.300l3.300 3.200v4.400c0 .600-.400 1-1 1H1.600c-.600 0-1-.400-1-1V1.600c0-.600.400-1 1-1z" fill="none" stroke="#2b2f3f" stroke-width="1.100"/><path d="M4.900 7.700V4.600M3.300 6 4.900 4.400 6.500 6" fill="none" stroke="#2b2f3f" stroke-width="1"/></svg>
<div class="t" style="left:1066.5px;top:708px;font-size:20.8px;line-height:23px;color:#3d3d42;transform:scale(0.4772,.5);">ЗРП_АР1_Архитектурные решения.pdf</div>
<svg style="left:1271.7px;top:708.3px" width="10.2" height="10.2" viewBox="0 0 10.400 10.400" ><circle cx="5.200" cy="5.200" r="5.200" fill="#3db56d"/><path d="M2.700 5.300 4.500 7.100 7.800 3.600" fill="none" stroke="#fff" stroke-width="1.400"/></svg>
<svg style="left:8.0px;top:64.0px" width="32" height="28" viewBox="0 0 32 28" ><path d="M8.700 13.600h2.600v7.400l-4.500 1z" fill="#ffffff"/><rect x="12.300" y="10.400" width="1.900" height="10.600" fill="#ffffff"/><rect x="15.300" y="10.100" width="2.200" height="10.800" fill="#ffffff"/><rect x="18.300" y="10.100" width="2.400" height="5.600" fill="#ffffff"/>
<path d="M9.900 5.700c1.800 0 3.200 1.400 3.200 3.200 0 1.700-1.600 2.900-3.200 4.600-1.600-1.700-3.200-2.900-3.200-4.600 0-1.800 1.400-3.200 3.200-3.200z" fill="#ffffff"/><circle cx="9.900" cy="8.800" r="1.600" fill="#3c4053"/>
<path d="M21.100 14.100c1.900 0 3.300 1.500 3.300 3.300 0 2.300-3.300 5.700-3.300 5.700s-3.300-3.400-3.300-5.700c0-1.800 1.400-3.300 3.300-3.300z" fill="#ffffff" stroke="#3c4053" stroke-width=".800"/><circle cx="21.100" cy="17.400" r="1.500" fill="#3c4053"/></svg>
<svg style="left:16.9px;top:124.9px" width="12.8" height="15.4" viewBox="0 0 12.800 15.400" ><path d="M1.300 1h3.600C5.200.400 5.700 0 6.400 0s1.200.400 1.500 1h3.600c.700 0 1.300.600 1.300 1.300v12.800c0 .700-.600 1.300-1.300 1.300H1.300C.600 15.400 0 14.800 0 14.100V1.300C0 .600.600 1 1.300 1z" fill="#ffffff"/><path d="M3.300 3.800h6.200v-.900H7.600L6.400 1.400 5.200 2.900H3.300z" fill="#3c4053"/><path d="M3.300 8.500 5.500 10.700 9.900 6.300" fill="none" stroke="#3c4053" stroke-width="1.350"/></svg>
<svg style="left:16.9px;top:179.7px" width="12.9" height="15.7" viewBox="0 0 12.900 15.700" ><path d="M1.400 0h7L12.900 4.300v10c0 .800-.600 1.400-1.400 1.400H1.400C.600 15.700 0 15.100 0 14.300V1.400C0 .600.600 0 1.400 0z" fill="#f2b01d"/><path d="M8.300 2.300v1.900h1.900z" fill="#5b4608"/><path d="M3.200 7.650h6.500M3.200 9.700h6.500M3.200 11.750h6.500" stroke="#4f3d05" stroke-width="1.150"/></svg>
<svg style="left:16.9px;top:233.9px" width="12.8" height="15.5" viewBox="0 0 12.800 15.500" ><path d="M1.300 1.500h3.200L6.400 0l1.900 1.500h3.200c.700 0 1.300.600 1.300 1.300v11.400c0 .700-.600 1.300-1.300 1.300H1.300C.600 15.500 0 14.900 0 14.200V2.800c0-.700.600-1.300 1.300-1.300z" fill="#ffffff"/><path d="M3.200 3.800h6.400L6.400 1.200z" fill="#3c4053"/><rect x="5.600" y="6" width="1.700" height="4.700" fill="#3c4053"/><rect x="5.600" y="11.400" width="1.700" height="1.400" fill="#3c4053"/></svg>
<svg style="left:15.1px;top:288.0px" width="16.2" height="16.2" viewBox="0 0 16.200 16.200" ><rect width="16.200" height="16.200" rx="2.600" fill="#ffffff"/><rect x="3.900" y="6.700" width="1.550" height="5.100" fill="#3c4053"/><rect x="7.500" y="4.100" width="1.550" height="7.700" fill="#3c4053"/><rect x="11" y="8.800" width="1.550" height="3" fill="#3c4053"/></svg>
<svg style="left:15.7px;top:343.1px" width="15.9" height="16" viewBox="0 0 15.900 16" ><rect width="15.900" height="16" rx="2.600" fill="#ffffff"/></svg>
<div class="t" style="left:20.7px;top:344px;font-size:23px;line-height:28px;color:#33363f;transform:scale(0.3986,.5);font-weight:bold;">?</div>
<svg style="left:15.3px;top:397.7px" width="16.2" height="15.7" viewBox="0 0 16.200 15.700" ><rect width="16.200" height="15.700" rx="3" fill="#ffffff"/><path d="M10.300 0v15.700" stroke="#3c4053" stroke-width=".900"/><path d="M10.700 4.700h5.500M10.700 9.900h5.500" stroke="#3c4053" stroke-width=".900"/><rect x="3.300" y="3.900" width="3.800" height="2.500" fill="none" stroke="#3c4053" stroke-width="1.100"/><path d="M2.800 9h4.800" stroke="#8a8d99" stroke-width="1"/><path d="M2.800 11.600h4.800" stroke="#3c4053" stroke-width="1"/></svg>
<svg style="left:15.4px;top:455.8px" width="16.4" height="9" viewBox="0 0 16.400 9" ><path d="M.700 5 3.800 8 10.200 1M7 6.800 8.300 8 15.400 1" fill="none" stroke="#ffffff" stroke-width="1.700"/></svg>
<svg style="left:8.0px;top:500.0px" width="32" height="28" viewBox="0 0 32 28" ><g fill="none" stroke="#ffffff" stroke-width="1.600" stroke-linecap="round"><path d="M16.300 6.700Q12.300 6.700 10 9.600"/><path d="M7.400 13.200Q7.500 17.400 10.400 20"/><path d="M13.900 22.300Q18.300 22.300 21 19.600"/><path d="M22.900 15.900Q22.700 11.600 19.900 8.800"/></g>
<g fill="#ffffff"><path d="M8 6.100 8 11.300 13.100 11.300 13.100 9.900 9.900 9.900 9.900 6.100z"/><path d="M6.800 22 12 22 12 17.400 10.500 17.400 10.500 20.200 6.800 20.200z"/><path d="M22.900 23.200 22.900 17.900 17.400 17.900 17.400 19.400 21 19.400 21 23.200z"/><path d="M23.900 6.900 18.300 6.900 18.300 12.300 19.900 12.300 19.900 8.600 23.900 8.600z"/></g></svg>
<div class="abs" style="left:14.800px;top:722.800px;width:17.400px;height:17.400px;background:#f1eff1"></div>
<svg style="left:14.8px;top:722.8px" width="17.4" height="17.4" viewBox="0 0 17.400 17.400" ><circle cx="8.700" cy="8.700" r="8.200" fill="none" stroke="#3a3a3a" stroke-width=".700"/><path d="M5.800 10.600C5 7 7.400 4.300 10.800 4.600c1.900.300 2.600 1.800 1.700 3.100" fill="none" stroke="#cc4a42" stroke-width="1.700"/><path d="M4.600 12c2.300 1.500 5.700 1.100 7.400-1.500" fill="none" stroke="#b93a34" stroke-width="1.200"/><path d="M8 6.800v4.400M10.800 6.900 8.300 9l2.700 2.300" fill="none" stroke="#2a2a2a" stroke-width="1"/><path d="M4.400 11.900c1.100 1 2.500 1.400 3.800 1.300" fill="none" stroke="#2a2a2a" stroke-width=".900"/></svg>
</div><div id="ring"></div><div class="abs" style="left:49px;top:0;width:1275px;height:1px;background:rgba(255,255,255,.4)"></div></div>
<div class="abs" style="left:0;top:0;width:8px;height:8px;background:#000"></div>
</body>
</html>
